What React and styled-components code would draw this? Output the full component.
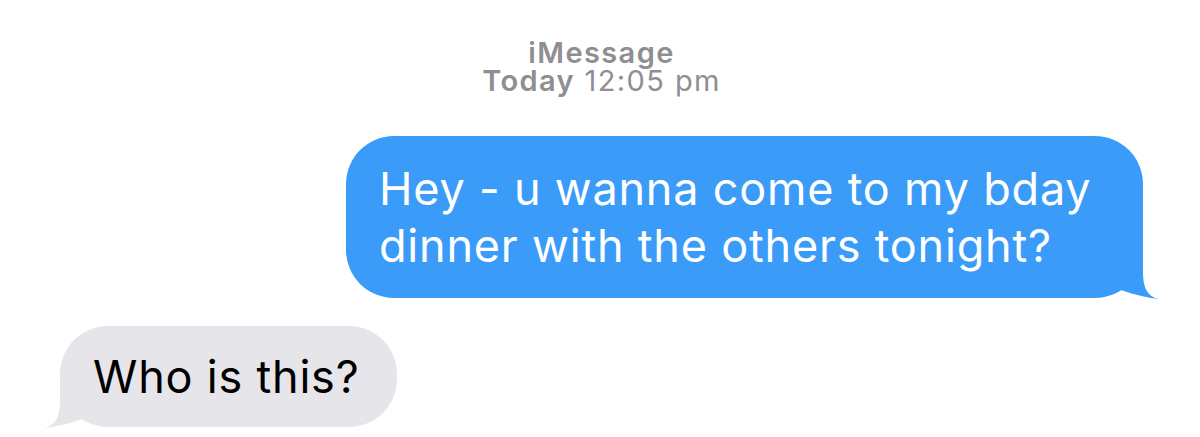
import React from 'react'
import styled, {createGlobalStyle} from 'styled-components'

const GlobalStyle = createGlobalStyle`
    html, body {
        margin: 0;
        padding: 0;
        background: #fff;
    }
    body {
        font-family: Inter, "Noto Sans", sans-serif;
        -webkit-font-smoothing: antialiased;
    }
`

const BLUE = '#3a9cf8'
const GREY = '#e5e5ea'

const Tail = ({color, side}) => (
    <TailSvg $side={side} viewBox="-26 -50 44 52" width="44" height="52">
        <path
            fill={color}
            d="M -24 -50 L 0 -50 L 0 -26 C 0 -8, 6 -1, 16 1 C 6 0, -8 -3, -22 -8 Z"
        />
    </TailSvg>
)

const App = () => {
    return (
        <>
        <GlobalStyle />
        <Thread>
            <Stamp>
                <Service>iMessage</Service>
                <div><Day>Today</Day> 12:05 pm</div>
            </Stamp>

            <Row $mine>
                <Bubble $mine>
                    Hey - u wanna come to my bday dinner with the others tonight?
                    <Tail color={BLUE} side="right" />
                </Bubble>
            </Row>

            <Row>
                <Bubble>
                    Who is this?
                    <Tail color={GREY} side="left" />
                </Bubble>
            </Row>
        </Thread>
        </>
    )
}

export default App



const Thread = styled.div`
    display: flex;
    flex-direction: column;
    width: 1200px;
    height: 437px;
    box-sizing: border-box;
    padding: 37px 57px 0 60px;
    overflow: hidden;
`

const Stamp = styled.div`
    text-align: center;
    color: #8e8e93;
    font-size: 29px;
    line-height: 27px;
    letter-spacing: 1.4px;
    padding-top: 2px;
    margin-bottom: 42px;
`

const Service = styled.div`
    font-weight: 600;
    margin-bottom: 1px;
`

const Day = styled.span`
    font-weight: 600;
`

const Row = styled.div`
    display: flex;
    justify-content: ${p => p.$mine ? 'flex-end' : 'flex-start'};
    margin-bottom: 28px;
`

const Bubble = styled.div`
    position: relative;
    box-sizing: border-box;
    max-width: 797px;
    padding: ${p => p.$mine ? '24px 40px 24px 33px' : '22px 38px 22px 33px'};
    border-radius: 48px;
    background: ${p => p.$mine ? BLUE : GREY};
    color: ${p => p.$mine ? '#fff' : '#000'};
    font-size: 45px;
    line-height: 57px;
    letter-spacing: 0.8px;
`

const TailSvg = styled.svg`
    position: absolute;
    bottom: -2px;
    ${p => p.$side === 'right' ? 'right: -18px;' : 'left: -18px; transform: scaleX(-1);'}
`
